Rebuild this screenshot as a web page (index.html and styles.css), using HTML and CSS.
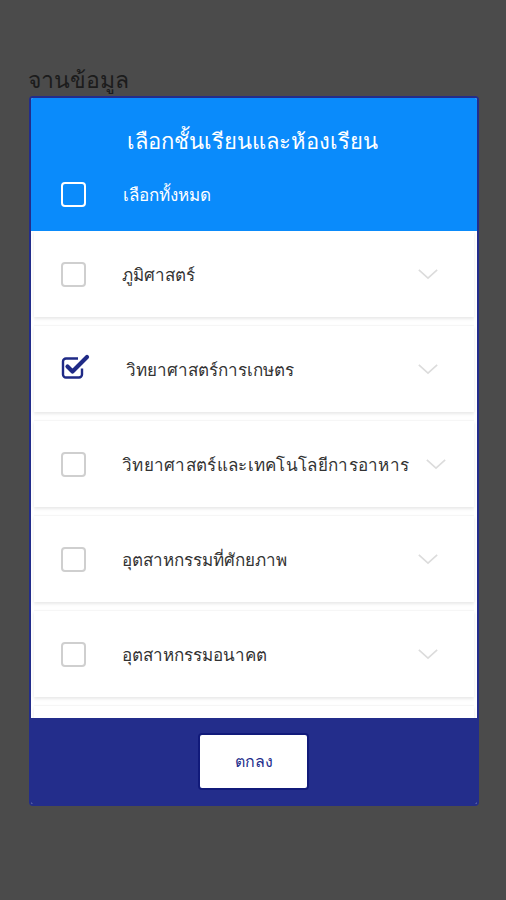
FILE: index.html
```html
<!DOCTYPE html>
<html lang="th">
<head>
    <meta charset="UTF-8">
    <title>เลือกชั้นเรียนและห้องเรียน</title>
    <link rel="stylesheet" href="styles.css">
</head>
<body>
    <div class="page">
        <h2 class="page-title">จานข้อมูล</h2>

        <div class="modal">
            <!-- Blue header with title and select-all -->
            <div class="modal-header">
                <h1 class="modal-title">เลือกชั้นเรียนและห้องเรียน</h1>
                <label class="select-all">
                    <span class="box box-white"></span>
                    <span class="select-all-text">เลือกทั้งหมด</span>
                </label>
            </div>

            <!-- Faculty list -->
            <div class="modal-list">
                <div class="item">
                    <span class="box"></span>
                    <span class="item-text">ภูมิศาสตร์</span>
                    <svg class="chevron" viewBox="0 0 24 14"><polyline points="2,2 12,11 22,2"/></svg>
                </div>
                <div class="item">
                    <svg class="box-checked" viewBox="0 0 30 28">
                        <path d="M21 15.5v6a3 3 0 0 1-3 3H5a3 3 0 0 1-3-3V8.5a3 3 0 0 1 3-3h12" fill="none" stroke="#1f2a86" stroke-width="2.4"/>
                        <path d="M6.5 13.5l5 5L26 4" fill="none" stroke="#1f2a86" stroke-width="4.2" stroke-linecap="round" stroke-linejoin="round"/>
                    </svg>
                    <span class="item-text">วิทยาศาสตร์การเกษตร</span>
                    <svg class="chevron" viewBox="0 0 24 14"><polyline points="2,2 12,11 22,2"/></svg>
                </div>
                <div class="item">
                    <span class="box"></span>
                    <span class="item-text item-text-long">วิทยาศาสตร์และเทคโนโลยีการอาหาร</span>
                    <svg class="chevron chevron-pushed" viewBox="0 0 24 14"><polyline points="2,2 12,11 22,2"/></svg>
                </div>
                <div class="item">
                    <span class="box"></span>
                    <span class="item-text">อุตสาหกรรมที่ศักยภาพ</span>
                    <svg class="chevron" viewBox="0 0 24 14"><polyline points="2,2 12,11 22,2"/></svg>
                </div>
                <div class="item">
                    <span class="box"></span>
                    <span class="item-text">อุตสาหกรรมอนาคต</span>
                    <svg class="chevron" viewBox="0 0 24 14"><polyline points="2,2 12,11 22,2"/></svg>
                </div>
                <!-- next card, scrolled out of view -->
                <div class="item"></div>
            </div>

            <!-- Footer with confirm button -->
            <div class="modal-footer">
                <button type="button" class="ok-btn">ตกลง</button>
            </div>
        </div>
    </div>
</body>
</html>
```

FILE: styles.css
```css
/* Dimmed page behind the dialog */
body, html {
    margin: 0;
    height: 100%;
    background-color: #4b4b4b;
    font-family: 'Noto Sans', 'Liberation Sans', sans-serif;
}
.page {
    padding: 63px 0 0 28px;
}
.page-title {
    margin: 0;
    font-size: 23px;
    font-weight: normal;
    line-height: 33px;
    color: #1c1c1c;
}
/* Dialog box */
.modal {
    width: 446px;
    margin-left: 1px;
    border: 2px solid #232d8b;
    border-radius: 4px;
    overflow: hidden;
    background: #fff;
}
.modal-header {
    height: 133px;
    background-color: #0a8bfb;
    box-sizing: border-box;
    padding: 24px 0 0 30px;
}
.modal-title {
    margin: 0 34px 0 0;
    text-align: center;
    font-size: 22px;
    font-weight: normal;
    line-height: 36px;
    color: #fff;
}
.select-all {
    display: flex;
    align-items: center;
    margin-top: 23px;
}
.select-all-text {
    margin-left: 37px;
    font-size: 17px;
    color: #fff;
}
/* Checkboxes */
.box {
    width: 21px;
    height: 21px;
    border: 2px solid #cfcfcf;
    border-radius: 4px;
    flex-shrink: 0;
}
.box-white {
    border-color: #fff;
}
.box-checked {
    width: 30px;
    height: 28px;
    flex-shrink: 0;
    margin-right: -3px;
    margin-top: -4px;
}
/* List of faculties */
.modal-list {
    height: 487px;
    overflow: hidden;
    padding: 0 3px;
}
.item {
    display: flex;
    align-items: center;
    height: 86px;
    margin-bottom: 9px;
    padding-left: 27px;
    background: #fff;
    box-shadow: 0 2px 3px rgba(0, 0, 0, 0.09), 0 -1px 1px rgba(0, 0, 0, 0.03);
}
.item-text {
    margin-left: 36px;
    font-size: 17px;
    color: #333;
    white-space: nowrap;
}
.item-text-long {
    letter-spacing: 0.3px;
}
.item .box-checked + .item-text {
    margin-left: 38px;
}
.chevron {
    width: 22px;
    height: 13px;
    margin-left: auto;
    margin-right: 35px;
    flex-shrink: 0;
    fill: none;
    stroke: #dcdcdc;
    stroke-width: 1.8;
}
.chevron-pushed {
    margin-right: 27px;
}
.modal-footer {
    height: 86px;
    background-color: #232d8b;
    display: flex;
    justify-content: center;
    align-items: flex-start;
    padding-top: 15px;
    box-sizing: border-box;
}
.ok-btn {
    width: 111px;
    height: 57px;
    margin-left: -1px;
    background: #fff;
    border: 2px solid #111a7a;
    border-radius: 4px;
    color: #232d8b;
    font-family: inherit;
    font-size: 16px;
    cursor: pointer;
}
```
